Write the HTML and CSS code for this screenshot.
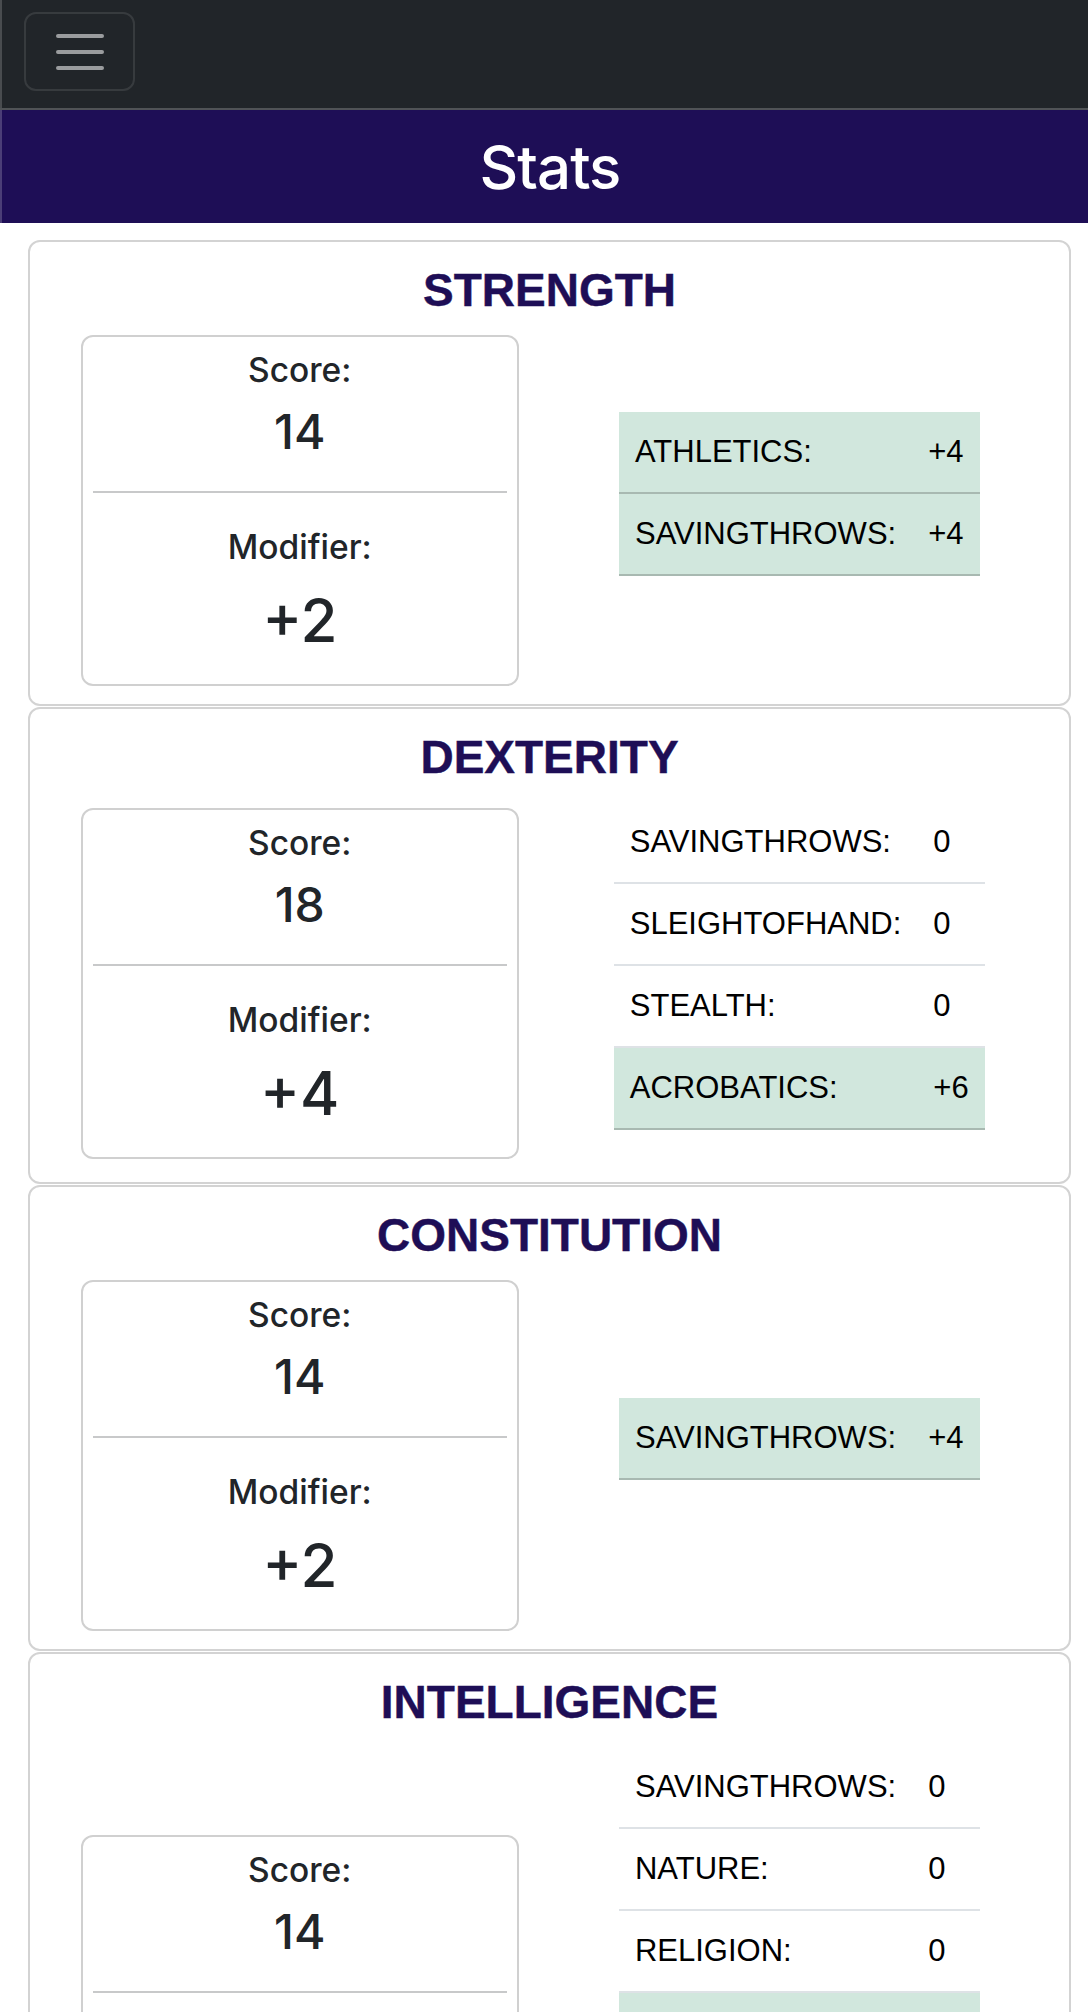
FILE: index.html
```html
<!DOCTYPE html>
<html lang="en">
<head>
<meta charset="utf-8">
<title>Stats</title>
<link rel="stylesheet" href="styles.css">
</head>
<body>
<nav class="navbar">
  <button class="toggler" type="button" aria-label="Toggle navigation">
    <svg class="toggler-icon" viewBox="0 0 30 30" width="60" height="60" aria-hidden="true">
      <path d="M4 7h22M4 15h22M4 23h22" stroke="rgba(255,255,255,0.55)" stroke-width="2" stroke-linecap="round" fill="none"/>
    </svg>
  </button>
</nav>
<header class="page-header"><h1>Stats</h1></header>
<main class="stats">
  <section class="stat-card">
    <h2 class="stat-title">STRENGTH</h2>
    <div class="stat-row">
      <div class="stat-col">
        <div class="score-box">
          <div class="label">Score:</div>
          <div class="score">14</div>
          <hr class="divider">
          <div class="label mod-label">Modifier:</div>
          <div class="mod">+2</div>
        </div>
      </div>
      <div class="stat-col">
        <table class="skills">
          <tr class="prof"><td>ATHLETICS:</td><td>+4</td></tr>
          <tr class="prof"><td>SAVINGTHROWS:</td><td>+4</td></tr>
        </table>
      </div>
    </div>
  </section>
  <section class="stat-card">
    <h2 class="stat-title">DEXTERITY</h2>
    <div class="stat-row">
      <div class="stat-col">
        <div class="score-box">
          <div class="label">Score:</div>
          <div class="score">18</div>
          <hr class="divider">
          <div class="label mod-label">Modifier:</div>
          <div class="mod">+4</div>
        </div>
      </div>
      <div class="stat-col">
        <table class="skills">
          <tr><td>SAVINGTHROWS:</td><td>0</td></tr>
          <tr><td>SLEIGHTOFHAND:</td><td>0</td></tr>
          <tr><td>STEALTH:</td><td>0</td></tr>
          <tr class="prof"><td>ACROBATICS:</td><td>+6</td></tr>
        </table>
      </div>
    </div>
  </section>
  <section class="stat-card">
    <h2 class="stat-title">CONSTITUTION</h2>
    <div class="stat-row">
      <div class="stat-col">
        <div class="score-box">
          <div class="label">Score:</div>
          <div class="score">14</div>
          <hr class="divider">
          <div class="label mod-label">Modifier:</div>
          <div class="mod">+2</div>
        </div>
      </div>
      <div class="stat-col">
        <table class="skills">
          <tr class="prof"><td>SAVINGTHROWS:</td><td>+4</td></tr>
        </table>
      </div>
    </div>
  </section>
  <section class="stat-card">
    <h2 class="stat-title">INTELLIGENCE</h2>
    <div class="stat-row">
      <div class="stat-col">
        <div class="score-box">
          <div class="label">Score:</div>
          <div class="score">14</div>
          <hr class="divider">
          <div class="label mod-label">Modifier:</div>
          <div class="mod">+2</div>
        </div>
      </div>
      <div class="stat-col">
        <table class="skills">
          <tr><td>SAVINGTHROWS:</td><td>0</td></tr>
          <tr><td>NATURE:</td><td>0</td></tr>
          <tr><td>RELIGION:</td><td>0</td></tr>
          <tr class="prof"><td>ARCANA:</td><td>+4</td></tr>
          <tr class="prof"><td>HISTORY:</td><td>+4</td></tr>
          <tr class="prof"><td>INVESTIGATION:</td><td>+4</td></tr>
        </table>
      </div>
    </div>
  </section>
</main>
</body>
</html>
```

FILE: styles.css
```css
* { box-sizing: border-box; }

body {
  margin: 0;
  background: #ffffff;
  color: #212529;
  font-family: Inter, "Noto Sans", "Liberation Sans", sans-serif;
}

.navbar {
  height: 110px;
  background: #212529;
  border-bottom: 2px solid #505356;
  padding: 12px 0 0 24px;
  box-shadow: inset 2px 0 0 rgba(255, 255, 255, 0.18);
}

.toggler {
  width: 111px;
  height: 79px;
  padding: 0;
  background: transparent;
  border: 2px solid rgba(255, 255, 255, 0.1);
  border-radius: 12px;
  display: flex;
  align-items: center;
  justify-content: center;
}

.toggler-icon { display: block; }

.page-header {
  height: 113px;
  background: #1e0e56;
  display: flex;
  align-items: center;
  justify-content: center;
  padding-left: 12px;
  box-shadow: inset 2px 0 0 rgba(255, 255, 255, 0.2);
}

.page-header h1 {
  margin: 0;
  color: #ffffff;
  font-size: 60px;
  font-weight: 500;
  line-height: 72px;
  letter-spacing: -1px;
}

.stats {
  margin: 17px 17px 0 28px;
}

.stat-card {
  border: 2px solid #d3d3d3;
  border-radius: 12px;
  padding: 21px 20px 18px;
  margin-bottom: 1px;
}

.stat-title {
  margin: 0 0 17px;
  text-align: center;
  font-family: "Liberation Sans", Arial, sans-serif;
  font-weight: 700;
  font-size: 46px;
  line-height: 55px;
  color: #1e0e56;
  -webkit-text-stroke: 0.4px #1e0e56;
}

.stat-row {
  display: grid;
  grid-template-columns: 1fr 1fr;
  align-items: center;
}

.score-box {
  margin: 0 31px;
  border: 2px solid #d0d0d0;
  border-radius: 12px;
  padding: 13px 0 28px;
  text-align: center;
}

.label {
  font-size: 33.5px;
  font-weight: 500;
  line-height: 40px;
}

.score {
  margin-top: 13px;
  font-size: 48px;
  font-weight: 500;
  line-height: 58px;
}

.divider {
  margin: 30px 10px 0;
  border: 0;
  border-top: 2px solid #c8c9ca;
  height: 0;
}

.mod-label { margin-top: 34px; }

.mod {
  margin-top: 17px;
  font-size: 60px;
  font-weight: 500;
  line-height: 72px;
}

.skills {
  border-collapse: collapse;
  margin: 0 auto 34px;
}

.skills td {
  padding: 17px 16px 18px;
  font-family: "Liberation Sans", Arial, sans-serif;
  font-size: 31px;
  line-height: 45px;
  color: #000000;
  border-bottom: 2px solid #dee2e6;
  text-align: left;
  white-space: nowrap;
}

.skills tr.prof td {
  background: #d1e7dd;
  border-bottom-color: #a8b9b1;
}
```
